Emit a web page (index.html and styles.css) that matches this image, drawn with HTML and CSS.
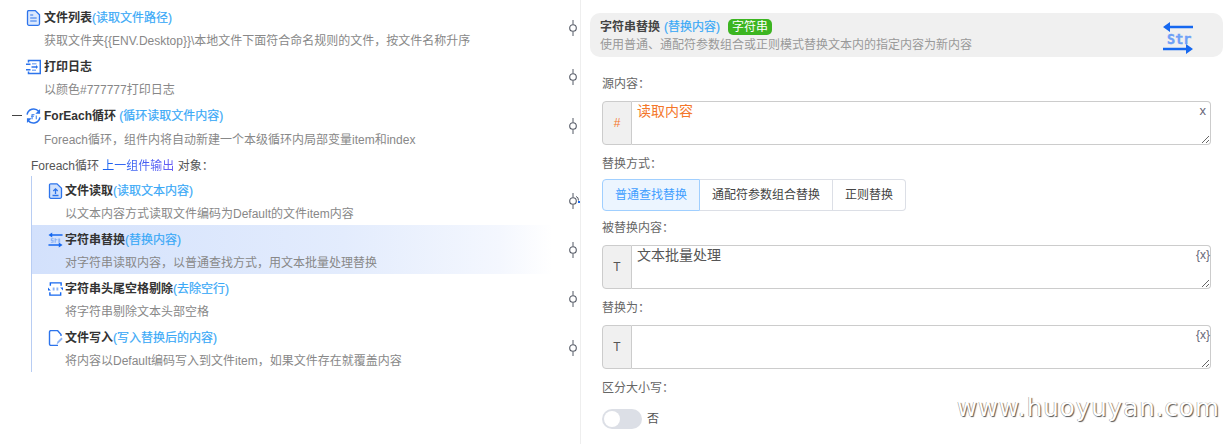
FILE: index.html
```html
<!DOCTYPE html>
<html lang="zh">
<head>
<meta charset="utf-8">
<title>字符串替换</title>
<link rel="stylesheet" href="styles.css">
</head>
<body>
<svg class="defs" width="0" height="0">
  <defs>
    <symbol id="connector" viewBox="0 0 8 16"><path d="M4 0v4.500M4 11.500v4.500" stroke="#555a66" fill="none"/><circle cx="4" cy="8" r="3.300" fill="#fff" stroke="#555a66" stroke-width="1.100"/></symbol>
    <symbol id="swap" viewBox="0 0 16 16"><path d="M3 2.700h12.500M0.500 13.300H13" stroke="#1668f0" stroke-width="1.500" fill="none"/><path d="M4.500 0 .5 2.700l4 2.700zM11.500 10.600l4 2.700-4 2.700z" fill="#1668f0"/><path d="M3 6h3v1.200H4.300v.8H6v3H3V9.800h1.700V9H3zM7 6h1.300v1.200H10v1H8.300V11H7zM11 6.500h2V11h-2z" fill="#8cb3f5"/></symbol>
  </defs>
</svg>
<div class="app">
  <section class="flow">
    <div class="row">
      <svg class="icon" viewBox="0 0 14 16"><path d="M1 1.700A1.200 1.200 0 0 1 2.200.6h6.600l4.200 4.200v9a1.500 1.500 0 0 1-1.500 1.500h-9A1.500 1.500 0 0 1 1 13.800z" fill="#dbe8fd" stroke="#2d74ec" stroke-width="1.300"/><path d="M3.700 5h3M3.700 8h6.500M3.700 11h6.500" stroke="#2d74ec" stroke-width="1.200"/></svg>
      <div class="text">
        <div class="title">文件列表<span class="note">(读取文件路径)</span></div>
        <div class="desc">获取文件夹{{ENV.Desktop}}\本地文件下面符合命名规则的文件，按文件名称升序</div>
      </div>
      <svg class="dot"><use href="#connector"/></svg>
    </div>
    <div class="row">
      <svg class="icon" viewBox="0 0 15 15"><path d="M2.500 3V1h11.800v13H2.500v-2" fill="none" stroke="#2d74ec" stroke-width="1.500"/><path d="M0 4.700h4.500M0 10.300h4.500M5.500 7.500h5.500" stroke="#2d74ec" stroke-width="1.500"/><path d="M6 4.300h4.500M6 10.700h4" stroke="#8cb3f5" stroke-width="1.400"/><path d="M10 5.500l2 2-2 2z" fill="#2d74ec"/></svg>
      <div class="text">
        <div class="title">打印日志</div>
        <div class="desc">以颜色#777777打印日志</div>
      </div>
      <svg class="dot"><use href="#connector"/></svg>
    </div>
    <div class="row">
      <span class="collapse"></span>
      <svg class="icon" viewBox="0 0 16 16"><path d="M1.200 6.500A7 7 0 0 1 13.500 3M14.800 9.500A7 7 0 0 1 2.500 13" fill="none" stroke="#2d74ec" stroke-width="1.600"/><path d="M15 0.500v5h-5zM1 15.500v-5h5z" fill="#2d74ec"/><path d="M6.500 11.500V6.500h2.500M5.300 8.500h3M11 7.500v4" stroke="#5a93f0" stroke-width="1.300" fill="none"/></svg>
      <div class="text">
        <div class="title">ForEach循环 <span class="note">(循环读取文件内容)</span></div>
        <div class="desc desc-low">Foreach循环，组件内将自动新建一个本级循环内局部变量item和index</div>
      </div>
      <svg class="dot"><use href="#connector"/></svg>
    </div>
    <div class="loop-head">Foreach循环 <span class="link">上一组件输出</span> 对象：</div>
    <div class="nested">
      <div class="row">
        <svg class="icon" viewBox="0 0 14 16"><path d="M1 2a1.200 1.200 0 0 1 1.200-1.200h6.300l4.500 4.500v8.500a1.500 1.500 0 0 1-1.500 1.500H2.500A1.500 1.500 0 0 1 1 13.300z" fill="#cfe0fc" stroke="#2d74ec" stroke-width="1.300"/><path d="M7 11V6M4.800 8 7 5.800 9.200 8M4 12.500h6" fill="none" stroke="#2d74ec" stroke-width="1.300"/></svg>
        <div class="text">
          <div class="title">文件读取<span class="note">(读取文本内容)</span></div>
          <div class="desc">以文本内容方式读取文件编码为Default的文件item内容</div>
        </div>
        <svg class="dot"><use href="#connector"/><path class="dot-curve" d="M7 3.500q2.500.5 2.500 4"/><rect class="dot-pin" x="9" y="8" width="2" height="2"/></svg>
      </div>
      <div class="row row-active">
        <svg class="icon"><use href="#swap"/></svg>
        <div class="text">
          <div class="title">字符串替换<span class="note">(替换内容)</span></div>
          <div class="desc">对字符串读取内容，以普通查找方式，用文本批量处理替换</div>
        </div>
        <svg class="dot"><use href="#connector"/></svg>
      </div>
      <div class="row">
        <svg class="icon" viewBox="0 0 16 16"><path d="M2.500 4.500V1.500h11.500v3M13.500 11.500v3H2v-3" fill="none" stroke="#1668f0" stroke-width="1.500"/><path d="M0 6.500 3 9.500H0zM16 9.500 13 6.500H16z" fill="#1668f0"/><path d="M5 6.500h2v3H5zM9 6.500h2v3H9z" fill="#8cb3f5"/></svg>
        <div class="text">
          <div class="title">字符串头尾空格剔除<span class="note">(去除空行)</span></div>
          <div class="desc">将字符串剔除文本头部空格</div>
        </div>
        <svg class="dot"><use href="#connector"/></svg>
      </div>
      <div class="row">
        <svg class="icon" viewBox="0 0 14 16"><path d="M12.500 6V4.500l-3.500-4H2.500A1.500 1.500 0 0 0 1 2v12a1.500 1.500 0 0 0 1.500 1.500h7" fill="none" stroke="#2d74ec" stroke-width="1.400"/><path d="M8 14.500l1-3 4-4 1.200 1.500-4 4z" fill="#8cb3f5"/></svg>
        <div class="text">
          <div class="title">文件写入<span class="note">(写入替换后的内容)</span></div>
          <div class="desc">将内容以Default编码写入到文件item，如果文件存在就覆盖内容</div>
        </div>
        <svg class="dot"><use href="#connector"/></svg>
      </div>
    </div>
  </section>

  <section class="panel">
    <header class="banner">
      <div class="banner-text">
        <div class="banner-title">字符串替换 <span class="note">(替换内容)</span><span class="tag">字符串</span></div>
        <div class="banner-desc">使用普通、通配符参数组合或正则模式替换文本内的指定内容为新内容</div>
      </div>
      <svg class="banner-icon" viewBox="0 0 30 30">
        <path d="M5 7h25M0 29h25" stroke="#1668f0" stroke-width="2.600" fill="none"/>
        <path d="M7 2 0 7l7 5zM23 24l7 5-7 5z" fill="#1668f0"/>
        <text x="4" y="24" class="banner-icon-text">Str</text>
      </svg>
    </header>

    <div class="form">
      <label class="label label-first">源内容：</label>
      <div class="input-box">
        <span class="prefix prefix-var">#</span>
        <textarea class="area area-var">读取内容</textarea>
        <span class="clear clear-x">x</span>
      </div>

      <label class="label label-seg">替换方式：</label>
      <div class="segments">
        <span class="segment segment-on">普通查找替换</span>
        <span class="segment">通配符参数组合替换</span>
        <span class="segment">正则替换</span>
      </div>

      <label class="label label-tight">被替换内容：</label>
      <div class="input-box">
        <span class="prefix">T</span>
        <textarea class="area">文本批量处理</textarea>
        <span class="clear">{x}</span>
      </div>

      <label class="label">替换为：</label>
      <div class="input-box">
        <span class="prefix">T</span>
        <textarea class="area"></textarea>
        <span class="clear">{x}</span>
      </div>

      <label class="label">区分大小写：</label>
      <div class="switch-row">
        <span class="switch"><span class="knob"></span></span>
        <span class="switch-text">否</span>
      </div>
    </div>
  </section>
</div>
<div class="watermark">www.huoyuyan.com</div>
</body>
</html>
```

FILE: styles.css
```css
* { box-sizing: border-box; }
html, body { margin: 0; height: 100%; overflow: hidden; }
body {
  background: #fff;
  font: 12px/16px "Liberation Sans", "Noto Sans CJK SC", sans-serif;
  color: #333;
}
.defs { position: absolute; }
.app { display: flex; height: 444px; }

.flow {
  width: 581px;
  flex: none;
  padding-top: 3px;
  border-right: 1px solid #eeeeee;
}
.row {
  display: flex;
  align-items: flex-start;
  height: 49px;
  padding-left: 26px;
  padding-top: 7px;
  position: relative;
}
.icon { width: 15px; height: 16px; flex: none; }
.text { margin-left: 3px; flex: 1; min-width: 0; }
.title { font-weight: 700; color: #333; line-height: 16px; }
.note { color: #3aa9f7; font-weight: 400; -webkit-text-stroke: 0.2px #3aa9f7; }
.desc { margin-top: 7px; color: #888; line-height: 16px; }
.desc-low { margin-top: 8px; }
.dot { width: 8px; height: 16px; flex: none; margin: 10px 3px 0 0; overflow: visible; }
.dot-curve { fill: none; stroke: #555a66; }
.dot-pin { fill: #1668f0; }
.collapse {
  position: absolute;
  left: 12px;
  top: 14px;
  width: 10px;
  height: 1px;
  background: #444;
}
.loop-head {
  height: 26px;
  padding-left: 31px;
  line-height: 32px;
  color: #555;
  font-family: "Liberation Sans", "Noto Sans CJK TC", sans-serif;
}
.link {
  background: linear-gradient(90deg, #1464f0, #6a5cf5);
  -webkit-background-clip: text;
  background-clip: text;
  color: transparent;
}
.nested {
  margin-left: 31px;
  border-left: 1px solid #b8cdf3;
  height: 196px;
}
.nested .row { padding-left: 16px; }
.nested .text { margin-left: 2px; }
.row-active {
  background: linear-gradient(90deg, #d3e1fc 0, #e3ecfd 60%, #f4f7fe 90%, #fff 100%);
  background-size: 520px 100%;
  background-repeat: no-repeat;
}

.panel { flex: 1; min-width: 0; padding: 13px 6px 0 9px; }
.banner {
  display: flex;
  justify-content: space-between;
  align-items: center;
  height: 44px;
  padding: 0 30px 0 10px;
  background: #f0f0f0;
  border-radius: 10px;
}
.banner-title { font-weight: 700; color: #444; line-height: 20px; display: flex; align-items: center; gap: 4px; }
.tag {
  margin-left: 4px;
  background: #3cb521;
  color: #fff;
  font-weight: 400;
  border-radius: 5px;
  padding: 0 4px;
  line-height: 16px;
}
.banner-desc { color: #999; line-height: 17px; }
.banner-icon { width: 30px; height: 30px; overflow: visible; }
.banner-icon-text { font: 700 13.500px "DejaVu Sans Mono", monospace; fill: #6ea0f7; stroke: #6ea0f7; stroke-width: 0.4px; }

.form { padding: 0 12px; }
.label {
  display: block;
  margin: 11px 0 9px;
  height: 16px;
  line-height: 16px;
  color: #666;
  font-family: "Liberation Sans", "Noto Sans CJK TC", sans-serif;
}
.label-first { margin-top: 19px; }
.label-seg { margin-bottom: 7px; }
.label-tight { margin-top: 9px; }
.input-box {
  position: relative;
  display: flex;
  height: 44px;
}
.prefix {
  flex: none;
  width: 30px;
  display: flex;
  align-items: center;
  justify-content: center;
  background: #f0f0f0;
  border: 1px solid #ccc;
  border-radius: 4px 0 0 4px;
  color: #555;
}
.prefix-var { color: #f4772a; }
.area {
  flex: 1;
  min-width: 0;
  margin: 0;
  padding: 0 5px;
  border: 1px solid #ccc;
  border-left: none;
  border-radius: 0 4px 4px 0;
  font: 14px/18px "Liberation Sans", "Noto Sans CJK SC", sans-serif;
  color: #555;
  outline: none;
  resize: vertical;
  background: #fff;
}
.area-var { color: #f4772a; }
.clear { position: absolute; right: 1px; top: 3px; font-size: 12px; line-height: 14px; color: #667; }
.clear-x { right: 5px; font-size: 13px; }

.segments { display: flex; height: 32px; width: 304px; }
.segment {
  display: flex;
  align-items: center;
  justify-content: center;
  border: 1px solid #dcdfe6;
  border-left: none;
  color: #444;
  padding: 0 12px;
  white-space: nowrap;
}
.segment:last-child { border-radius: 0 4px 4px 0; }
.segment-on {
  border: 1px solid #a0cfff;
  background: #ecf5ff;
  color: #409eff;
  border-radius: 4px 0 0 4px;
}

.switch-row { display: flex; align-items: center; gap: 5px; height: 20px; margin-top: 13px; }
.switch { width: 40px; height: 20px; border-radius: 10px; background: #dcdfe6; padding: 2px; display: block; }
.knob { display: block; width: 16px; height: 16px; border-radius: 50%; background: #fff; }
.switch-text { color: #555; }

.watermark {
  position: absolute;
  left: 957px;
  top: 392px;
  font: 24.500px/32px "DejaVu Sans", sans-serif;
  letter-spacing: 1px;
  color: #fff;
  text-shadow: 1px 1px 1px #555, -0.5px -0.5px 0.5px #999;
  white-space: nowrap;
}
```
